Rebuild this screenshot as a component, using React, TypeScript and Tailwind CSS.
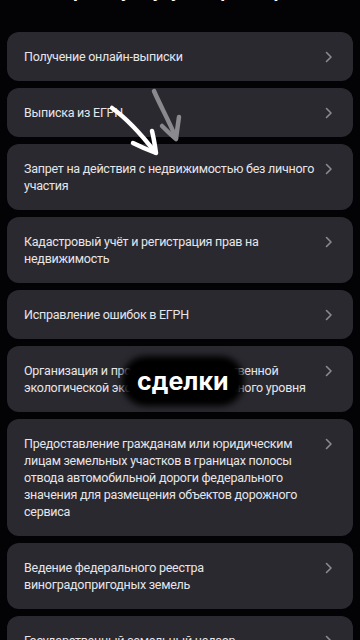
import React from "react";

const items: string[][] = [
  ["Получение онлайн-выписки"],
  ["Выписка из ЕГРН"],
  ["Запрет на действия с недвижимостью без личного", "участия"],
  ["Кадастровый учёт и регистрация прав на", "недвижимость"],
  ["Исправление ошибок в ЕГРН"],
  ["Организация и проведение государственной", "экологической экспертизы федерального уровня"],
  [
    "Предоставление гражданам или юридическим",
    "лицам земельных участков в границах полосы",
    "отвода автомобильной дороги федерального",
    "значения для размещения объектов дорожного",
    "сервиса",
  ],
  ["Ведение федерального реестра", "виноградопригодных земель"],
  ["Государственный земельный надзор"],
];

function Chevron() {
  return (
    <svg width="8" height="12" viewBox="0 0 8 12" className="shrink-0 mt-[3px]">
      <path d="M1.5 1.5 L6 6 L1.5 10.5" fill="none" stroke="#8b8a90" strokeWidth="1.6" strokeLinecap="round" strokeLinejoin="round" />
    </svg>
  );
}

export default function App() {
  return (
    <div
      className="relative w-[360px] h-[640px] overflow-hidden bg-[#030305]"
      style={{ fontFamily: "Roboto, 'Noto Sans', sans-serif" }}
    >
      <div className="h-[32px] overflow-hidden relative">
        <div className="absolute left-[22px] top-[-21px] text-[20px] font-semibold text-white leading-[22px]">
          Выберите услугу Росреестра
        </div>
      </div>
      <div className="flex flex-col gap-[7px] px-[7px]">
        {items.map((lines, i) => (
          <div
            key={i}
            className="flex items-start justify-between rounded-[12px] bg-[#2a292f] pl-[17px] pr-[20px] py-[16px]"
          >
            <div className="text-[12.5px] leading-[17px] tracking-[-0.25px] text-[#e6e5ea]">
              {lines.map((l, j) => (
                <div key={j} className="whitespace-nowrap">{l}</div>
              ))}
            </div>
            <Chevron />
          </div>
        ))}
      </div>

      {/* arrows overlay */}
      <svg className="absolute left-0 top-0 pointer-events-none" width="360" height="640">
        <path d="M154 91 C160 105 169 121 176 138" fill="none" stroke="#8a898e" strokeWidth="4.5" strokeLinecap="round" />
        <path d="M162 126 C167 131 171 135 176 139 C177 131 178 124 179 117" fill="none" stroke="#8a898e" strokeWidth="4.5" strokeLinecap="round" strokeLinejoin="round" />
        <path d="M112 108 C126 118 141 134 155 152" fill="none" stroke="#ffffff" strokeWidth="4.5" strokeLinecap="round" />
        <path d="M133 143 C141 147 148 150 156 153 C155 146 154 139 152 131" fill="none" stroke="#ffffff" strokeWidth="4.5" strokeLinecap="round" strokeLinejoin="round" />
      </svg>

      {/* sticker */}
      <div className="absolute left-[128px] top-[362px] rounded-[18px] bg-black px-[9px] py-[2px] shadow-[0_0_6px_6px_#000]">
        <span className="text-[25px] font-bold leading-[34px] text-white" style={{ fontFamily: "Inter, sans-serif" }}>
          сделки
        </span>
      </div>
    </div>
  );
}
